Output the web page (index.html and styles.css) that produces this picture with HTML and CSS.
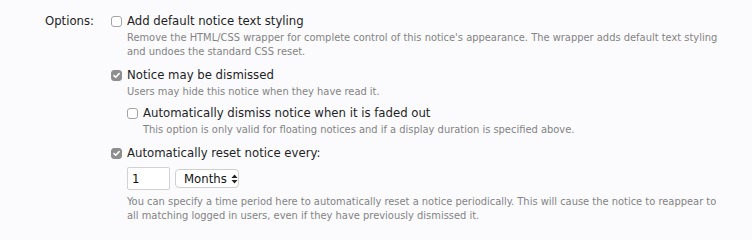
FILE: index.html
```html
<!DOCTYPE html>
<html lang="en">
<head>
<meta charset="utf-8">
<title>Notice options</title>
<link rel="stylesheet" href="styles.css">
</head>
<body>
<div class="ctrl-row">
  <div class="ctrl-label">Options:</div>
  <ul class="choices">
    <li class="choice">
      <div class="check-line">
        <span class="box"></span>
        <span class="check-text">Add default notice text styling</span>
      </div>
      <p class="hint">Remove the HTML/CSS wrapper for complete control of this notice's appearance. The wrapper adds default text styling and undoes the standard CSS reset.</p>
    </li>
    <li class="choice">
      <div class="check-line">
        <span class="box checked"><svg viewBox="0 0 11 11" width="11" height="11"><path d="M3 5.6 L4.7 7.3 L8.1 3.6" fill="none" stroke="#fff" stroke-width="1.6" stroke-linecap="round" stroke-linejoin="round"/></svg></span>
        <span class="check-text">Notice may be dismissed</span>
      </div>
      <p class="hint">Users may hide this notice when they have read it.</p>
      <ul class="choices nested">
        <li class="choice">
          <div class="check-line">
            <span class="box"></span>
            <span class="check-text">Automatically dismiss notice when it is faded out</span>
          </div>
          <p class="hint">This option is only valid for floating notices and if a display duration is specified above.</p>
        </li>
      </ul>
    </li>
    <li class="choice">
      <div class="check-line">
        <span class="box checked"><svg viewBox="0 0 11 11" width="11" height="11"><path d="M3 5.6 L4.7 7.3 L8.1 3.6" fill="none" stroke="#fff" stroke-width="1.6" stroke-linecap="round" stroke-linejoin="round"/></svg></span>
        <span class="check-text">Automatically reset notice every:</span>
      </div>
      <div class="period">
        <input class="num" type="text" value="1">
        <div class="select">
          <span>Months</span>
          <svg viewBox="0 0 7 10" width="7" height="10"><path d="M3.5 0.5 L6.5 4 L0.5 4 Z M0.5 6 L6.5 6 L3.5 9.5 Z" fill="#222"/></svg>
        </div>
      </div>
      <p class="hint">You can specify a time period here to automatically reset a notice periodically. This will cause the notice to reappear to all matching logged in users, even if they have previously dismissed it.</p>
    </li>
  </ul>
</div>
</body>
</html>
```
FILE: styles.css
```css
html, body {
  margin: 0;
  background: #fbfbfe;
}
body {
  font-family: "DejaVu Sans Condensed", "DejaVu Sans", sans-serif;
  color: #1e1e1e;
}
.ctrl-row {
  display: grid;
  grid-template-columns: 94px 1fr;
  column-gap: 17px;
  padding: 13px 26px 0 0;
}
.ctrl-label {
  text-align: right;
  font-size: 13px;
  line-height: 16px;
}
.choices {
  list-style: none;
  margin: 0;
  padding: 0;
}
.choice + .choice {
  margin-top: 8px;
}
.nested {
  margin-top: 6px;
  padding-left: 16px;
}
.check-line {
  display: flex;
  align-items: center;
  gap: 5px;
  font-size: 13px;
  line-height: 16px;
}
.box {
  width: 11px;
  height: 11px;
  box-sizing: border-box;
  border: 1px solid #a4a4a4;
  border-radius: 3px;
  background: #fff;
  flex: none;
  display: flex;
}
.box.checked {
  background: #8e8e8e;
  border-color: #8e8e8e;
}
.box.checked svg {
  margin: -1px;
}
.hint {
  margin: 2px 0 0 16px;
  font-size: 11px;
  line-height: 14px;
  color: #838383;
}
.period {
  display: flex;
  align-items: center;
  gap: 5px;
  margin: 6px 0 0 16px;
}
.num {
  box-sizing: border-box;
  width: 43px;
  height: 23px;
  margin: 0;
  padding: 0 4px;
  border: 1px solid #d2d2d2;
  border-radius: 2px;
  background: #fff;
  font: 13px "DejaVu Sans Condensed", "DejaVu Sans", sans-serif;
  color: #111;
}
.select {
  box-sizing: border-box;
  width: 64px;
  height: 19px;
  display: flex;
  align-items: center;
  gap: 4px;
  padding-left: 8px;
  border: 1px solid #cfcfcf;
  border-radius: 4px;
  background: #fff;
  font-size: 13px;
  line-height: 17px;
  color: #111;
}
.period + .hint {
  margin-top: 5px;
}
```
